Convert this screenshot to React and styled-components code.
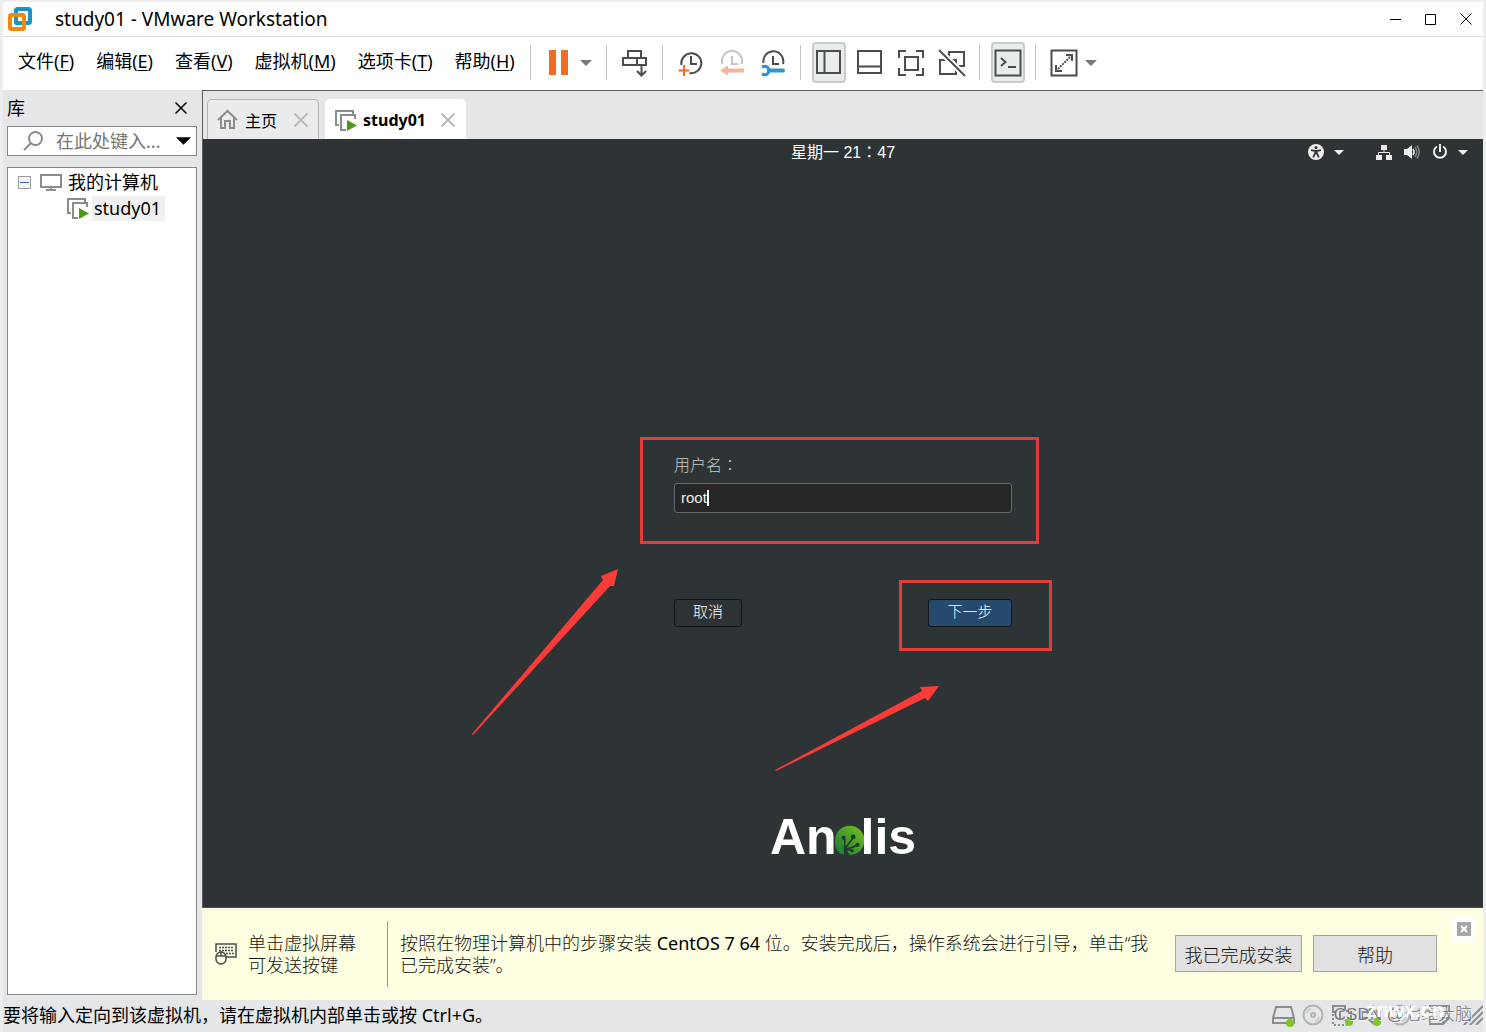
import React, { useState } from 'react';
import styled, { ThemeProvider, createGlobalStyle } from 'styled-components';

const theme = {
  colors: {
    chrome: '#e4e6e8',
    edge: '#eeeeee',
    white: '#ffffff',
    black: '#000000',
    stroke: '#4a4d50',
    grey: '#8a8d90',
    screen: '#2e3436',
    note: '#ffffe1',
    red: '#fa3b38',
    green: '#4a9a16',
    led: '#7fc81e',
    orange: '#f26b21',
    blue: '#2f93cf',
  },
  fonts: {
    ui: "'Noto Sans', 'Noto Sans CJK SC', sans-serif",
    vm: "'Liberation Sans', 'Noto Sans CJK SC', sans-serif",
  },
};

const GlobalStyle = createGlobalStyle`
  * {
    box-sizing: border-box;
  }

  body {
    margin: 0;
    background-color: ${theme.colors.edge};
    font-family: ${theme.fonts.ui};
    font-size: 18px;
    color: ${theme.colors.black};
  }

  svg {
    display: block;
    flex: none;
  }

  button,
  input {
    font: inherit;
    color: inherit;
  }
`;

const Window = styled.div`
  display: flex;
  flex-direction: column;
  min-height: 100vh;
  padding: 2px 3px 0;
`;

const TitleBar = styled.header`
  display: flex;
  align-items: center;
  height: 35px;
  padding-left: 4px;
  background-color: ${({ theme }) => theme.colors.white};
  border-bottom: 1px solid #dedfe1;
`;

const Title = styled.h1`
  flex: 1;
  margin: 0 0 0 22px;
  font-size: 19px;
  font-weight: 400;
  line-height: 24px;
`;

const PlainButton = styled.button`
  display: flex;
  align-items: center;
  justify-content: center;
  padding: 0;
  border: none;
  background-color: transparent;
`;

const CaptionButton = styled(PlainButton)`
  width: 35px;
  height: 32px;
`;

const MenuBar = styled.div`
  display: flex;
  align-items: center;
  height: 53px;
  padding-bottom: 2px;
  background-color: ${({ theme }) => theme.colors.white};
`;

const Menu = styled.nav`
  display: flex;
  gap: 22px;
  padding: 0 15px 4px;
`;

const MenuItem = styled(PlainButton)`
  line-height: 26px;
  white-space: nowrap;

  u {
    text-underline-offset: 2px;
    text-decoration-thickness: 1px;
  }
`;

const ToolBar = styled.div`
  display: flex;
  align-items: center;
`;

const ToolGroup = styled.div`
  display: flex;
  align-items: center;
  gap: ${({ $split }) => ($split ? '0' : '7px')};
  padding: 0 10px 0 11px;
  border-left: 1px solid #c3c5c7;
  height: 35px;
`;

const ToolButton = styled(PlainButton)`
  width: 34px;
  height: 41px;
  border: 2px solid ${({ $active }) => ($active ? '#c9cccd' : 'transparent')};
  border-radius: 4px;
  background-color: ${({ $active }) => ($active ? '#e9ecec' : 'transparent')};
`;

const SplitArrow = styled(PlainButton)`
  width: 20px;
  height: 41px;
`;

const Body = styled.div`
  display: flex;
  flex: 1;
  background-color: ${({ theme }) => theme.colors.chrome};
`;

const Sidebar = styled.aside`
  display: flex;
  flex-direction: column;
  flex: none;
  width: 199px;
  padding: 0 5px 5px 4px;
`;

const SidebarHead = styled.div`
  display: flex;
  align-items: center;
  justify-content: space-between;
  height: 36px;
`;

const SidebarTitle = styled.h2`
  margin: 0;
  font-size: 18px;
  font-weight: 400;
  line-height: 26px;
`;

const CloseLibrary = styled(PlainButton)`
  width: 32px;
  height: 28px;
`;

const SearchBox = styled.label`
  display: flex;
  align-items: center;
  height: 30px;
  padding: 0 5px 0 14px;
  border: 1px solid #85888b;
  background-color: ${({ theme }) => theme.colors.white};
`;

const SearchInput = styled.input`
  flex: 1;
  min-width: 0;
  margin: 0 14px 0 12px;
  padding: 0;
  border: none;
  outline: none;
  background-color: transparent;
  line-height: 26px;

  &::placeholder {
    color: #757575;
    opacity: 1;
  }
`;

const Tree = styled.ul`
  flex: 1;
  margin: 11px 0 0;
  padding: 1px 0 0 10px;
  list-style: none;
  border: 1px solid #85888b;
  background-color: ${({ theme }) => theme.colors.white};
`;

const TreeRow = styled.li`
  display: flex;
  align-items: center;
  gap: ${({ $child }) => ($child ? '4px' : '6px')};
  height: 26px;
  padding-left: ${({ $child }) => ($child ? '48px' : '0')};
`;

const Twisty = styled(PlainButton)`
  width: 13px;
  height: 13px;
  margin-right: 3px;
  border: 1px solid #9a9da0;
  background-color: #f3f3f3;
`;

const TreeLabel = styled.span`
  padding: 0 4px 0 2px;
  margin-left: -2px;
  line-height: 25px;
  background-color: ${({ $selected }) => ($selected ? '#f0f0f0' : 'transparent')};
`;

const Main = styled.main`
  display: flex;
  flex-direction: column;
  flex: 1;
  min-width: 0;
  border-top: 1px solid #5b5e60;
  border-left: 1px solid #5b5e60;
`;

const Tabs = styled.div`
  display: flex;
  align-items: flex-end;
  gap: 6px;
  height: 48px;
  padding-left: 4px;
`;

const Tab = styled(PlainButton)`
  gap: ${({ $active }) => ($active ? '5px' : '7px')};
  height: 40px;
  padding: ${({ $active }) => ($active ? '0 10px 0 8px' : '0 10px 0 9px')};
  border: 1px solid ${({ $active }) => ($active ? '#ffffff' : '#b3b6b8')};
  border-bottom: none;
  border-radius: 5px 5px 0 0;
  background-color: ${({ $active }) => ($active ? '#ffffff' : '#e9ebec')};
  font-size: 16px;
  font-weight: ${({ $active }) => ($active ? 700 : 400)};

  svg:last-child {
    margin-left: 10px;
  }
`;

const Screen = styled.section`
  position: relative;
  display: flex;
  flex-direction: column;
  flex: 1;
  background-color: ${({ theme }) => theme.colors.screen};
  border-bottom: 1px solid #4b4f50;
  color: #eeeeec;
  font-family: ${({ theme }) => theme.fonts.vm};
  font-weight: 300;
`;

const GnomeBar = styled.div`
  display: grid;
  grid-template-columns: 1fr auto 1fr;
  align-items: center;
  height: 26px;
`;

const Clock = styled.time`
  grid-column: 2;
  font-size: 16px;
  font-weight: 400;
  line-height: 24px;
  color: ${({ theme }) => theme.colors.white};
`;

/* the guest centres its fullwidth colon */
const Colon = styled.span`
  font-family: 'Noto Sans CJK TC', sans-serif;
`;

const Indicators = styled.div`
  display: flex;
  align-items: center;
  justify-content: flex-end;
  gap: 12px;
  padding-right: 15px;
`;

const IndicatorMenu = styled.div`
  display: flex;
  align-items: center;
  gap: 10px;

  &:first-child {
    margin-right: 20px;
  }
`;

const Greeter = styled.div`
  display: grid;
  flex: 1;
  grid-template-rows: 1fr auto 1fr;
  justify-items: center;
`;

const Login = styled.form`
  position: relative;
  grid-row: 2;
  width: 338px;
`;

const LoginLabel = styled.label`
  display: block;
  height: 38px;
  font-size: 16px;
  line-height: 38px;
  color: #c4c8c7;
`;

const LoginField = styled.div`
  display: flex;
  align-items: center;
  height: 30px;
  padding-left: 6px;
  border: 1px solid #636867;
  border-radius: 3px;
  background-color: #262626;
`;

const LoginInput = styled.input`
  field-sizing: content;
  padding: 0;
  border: none;
  outline: none;
  background-color: transparent;
  caret-color: transparent;
  font-size: 15px;
  line-height: 20px;
`;

const Caret = styled.span`
  width: 2px;
  height: 16px;
  background-color: ${({ theme }) => theme.colors.white};
`;

const LoginActions = styled.div`
  display: flex;
  justify-content: space-between;
  margin-top: 86px;
`;

const LoginButton = styled.button`
  width: ${({ $primary }) => ($primary ? '84px' : '68px')};
  height: 28px;
  padding: 0 0 2px;
  border: 1px solid #121617;
  border-radius: 3px;
  background-color: ${({ $primary }) => ($primary ? '#264a6d' : '#2d3335')};
  color: ${({ theme }) => theme.colors.white};
  font-size: 15px;
  line-height: 22px;
`;

const Marks = styled.svg`
  position: absolute;
  top: -8px;
  left: -202px;
  pointer-events: none;
`;

const Brand = styled.div`
  display: flex;
  grid-row: 3;
  align-self: end;
  align-items: flex-end;
  margin-bottom: 41px;
  color: ${({ theme }) => theme.colors.white};
  font-size: 50px;
  font-weight: 700;
  line-height: 58px;

  svg {
    margin: 0 -4px 10px -3px;
  }
`;

const NoteBar = styled.section`
  display: flex;
  align-items: flex-start;
  flex: none;
  min-height: 92px;
  padding: 13px 10px 13px 13px;
  margin-left: -1px;
  background-color: ${({ theme }) => theme.colors.note};
  color: #141414;
`;

const NoteHint = styled.p`
  flex: none;
  width: 140px;
  height: 66px;
  margin: 0;
  padding: 11px 24px 0 0;
  font-weight: 300;
  line-height: 22px;
  border-right: 1px solid #9b9c8e;
`;

const NoteText = styled.p`
  flex: 1;
  margin: 0;
  padding: 11px 20px 0 12px;
  font-weight: 300;
  line-height: 22px;

  b {
    font-weight: 400;
    color: ${({ theme }) => theme.colors.black};
  }
`;

const NoteIcon = styled.div`
  padding: 22px 11px 0 0;
`;

const NoteActions = styled.div`
  display: flex;
  gap: 11px;
  padding-top: 14px;
`;

const NoteButton = styled.button`
  width: ${({ $wide }) => ($wide ? '127px' : '124px')};
  height: 37px;
  padding: 0;
  border: 1px solid #a3a3a3;
  background-color: #e1e1e1;
  font-weight: 300;
`;

const NoteClose = styled(PlainButton)`
  width: 23px;
  height: 26px;
  margin: -5px -2px 0 15px;
  background-color: #fdfdfa;
`;

const StatusBar = styled.footer`
  position: relative;
  display: flex;
  align-items: center;
  justify-content: space-between;
  height: 32px;
  padding-bottom: 2px;
  background-color: ${({ theme }) => theme.colors.chrome};
  line-height: 26px;
`;

const Devices = styled.div`
  display: flex;
  align-items: center;
  gap: 7px;

  svg:last-child {
    margin-left: 5px;
  }
`;

const DeviceDivider = styled.span`
  width: 2px;
  height: 14px;
  background-color: #c3c5c7;
`;

const Watermark = styled.span`
  position: absolute;
  right: 11px;
  bottom: 4px;
  color: #77797b;
  font-family: ${({ theme }) => theme.fonts.vm};
  font-size: 17px;
  font-weight: 300;
  line-height: 26px;
  text-shadow: 1px 1px 0 #f6f6f6;
`;

const SiteMark = styled(Watermark)`
  right: 39px;
  bottom: 9px;
  color: ${({ theme }) => theme.colors.white};
  font-size: 20px;
  font-weight: 700;
  text-shadow: none;
`;

const { stroke, grey, green, led, orange, blue, red } = theme.colors;

const Icon = ({ w = 28, h = w, color = stroke, width = 2, children }) => (
  <svg
    width={w}
    height={h}
    viewBox={`0 0 ${w} ${h}`}
    fill="none"
    stroke={color}
    strokeWidth={width}
    aria-hidden="true"
  >
    {children}
  </svg>
);

const Chevron = ({ color = '#77797b', w = 12, h = 6 }) => (
  <svg width={w} height={h} viewBox="0 0 12 6" aria-hidden="true">
    <path d="M0 0h12L6 6z" fill={color} />
  </svg>
);

const Cross = ({ size = 12, color = '#000', width = 1 }) => (
  <Icon w={size} color={color} width={width}>
    <path d={`M.5.5l${size - 1} ${size - 1}M${size - 0.5}.5l-${size - 1} ${size - 1}`} />
  </Icon>
);

const VmwareLogo = () => (
  <Icon w={26} width={4}>
    <rect x="9" y="3" width="14" height="14" rx="1.5" stroke="#1a92c4" />
    <rect x="3" y="9" width="14" height="14" rx="1.5" stroke="#f0870f" />
    <path d="M9 12v3.500q0 1.500 1.500 1.500H14" stroke="#1a92c4" />
  </Icon>
);

const PauseIcon = () => (
  <svg width="20" height="26" viewBox="0 0 20 26" aria-hidden="true">
    <path d="M0 0h7v25H0zM12 0h7v25h-7z" fill={orange} />
  </svg>
);

const SendKeysIcon = () => (
  <Icon>
    <path d="M7 9V2h13v7M2 9h23v7H2zM16 9v7M20.500 17v9M16 22l4.500 4.500L25 22" />
  </Icon>
);

const SnapshotIcon = () => (
  <Icon>
    <path d="M4.500 16a10 10 0 1 1 8 8M14 7v8h6" />
    <path d="M7 16v11M1.500 21.500h11" stroke={orange} />
  </Icon>
);

const RevertIcon = () => (
  <Icon color="#c3c5c7">
    <path d="M4.500 15a10 10 0 1 1 19 0M14 7v8h6" />
    <path d="M26 21.500H8" stroke="#f9b498" strokeWidth="4" />
    <path d="M2 21.500l8-5v10z" fill="#f9b498" stroke="none" />
  </Icon>
);

const ManageIcon = () => (
  <Icon>
    <path d="M4.500 14a10 10 0 1 1 19.500 1M14 7v8h6" />
    <path d="M10 21.500h14" stroke={blue} strokeWidth="4" strokeLinecap="round" />
    <path d="M3 18q6-2.500 7 3.500q-1 6-7 3.500" stroke={blue} strokeWidth="3" />
  </Icon>
);

const LibraryIcon = () => (
  <Icon>
    <path d="M2 2h23v22H2zM9.500 2v22" />
  </Icon>
);

const ThumbnailIcon = () => (
  <Icon>
    <path d="M2 2h23v22H2zM2 17.500h23" />
  </Icon>
);

const FullScreenIcon = () => (
  <Icon>
    <path d="M2 9V2h7M19 2h7v7M26 19v7h-7M9 26H2v-7M8 8h13v13H8z" />
  </Icon>
);

const UnityIcon = () => (
  <Icon>
    <path d="M11 8V3h15v14h-6M12 11h6v5M8 11H2v14h16v-6" />
    <path d="M1 1l26 26" stroke="#fff" strokeWidth="6" />
    <path d="M1 1l26 26" />
  </Icon>
);

const ConsoleIcon = () => (
  <Icon>
    <path d="M1.500 1.500h25v25h-25zM7 9l4.500 4L7 17M14 18h8" />
  </Icon>
);

const StretchIcon = () => (
  <Icon>
    <path d="M1.500 1.500h25v25h-25zM16 6h6v6M6 16v6h6" />
    <path d="M8 20L21 7" strokeDasharray="2 1" />
  </Icon>
);

const HomeIcon = () => (
  <Icon w={21} color={grey}>
    <path d="M1 11L10.500 2L20 11M4 9v10h4v-7h5v7h4V9" />
  </Icon>
);

const VmIcon = () => (
  <Icon w={24} h={22} color={grey}>
    <path d="M5 16H2V2h17v4" />
    <path d="M12 21H7V6h14v4" />
    <path d="M13 11l10 5.500L13 22z" fill={green} stroke="none" />
  </Icon>
);

const ComputerIcon = () => (
  <Icon w={22} h={18} color={grey}>
    <path d="M1 2h20v12H1zM11 14v3M6 17h10" />
  </Icon>
);

const SearchIcon = () => (
  <Icon w={22} color={grey}>
    <circle cx="13.500" cy="8.500" r="6.500" />
    <path d="M9 13l-7 7" />
  </Icon>
);

const KeyboardIcon = () => (
  <Icon w={22} color={stroke} width={1.5}>
    <path d="M1 9V1h20v13H11" />
    <path d="M4 4.500h15M4 7.500h15M11 10.500h8" strokeDasharray="2 1" />
    <rect x="1" y="9" width="10" height="12" rx="5" />
    <path d="M1 13h10M6 8v5" />
  </Icon>
);

const AccessIcon = () => (
  <svg width="16" height="16" viewBox="0 0 16 16" aria-hidden="true">
    <circle cx="8" cy="8" r="8" fill="#eeeeec" />
    <circle cx="8" cy="3.400" r="1.500" fill="#2e3436" />
    <path
      d="M3 6.200l3.500.600h3l3.500-.600M8 7v3M5.200 13.500L7.200 9h1.600l2 4.500"
      fill="none"
      stroke="#2e3436"
      strokeWidth="1.800"
    />
  </svg>
);

const NetworkIcon = () => (
  <svg width="16" height="16" viewBox="0 0 16 16" aria-hidden="true">
    <path d="M5 1h6v5H5zM0 11h6v5H0zM10 11h6v5h-6z" fill="#eeeeec" />
    <path d="M8 5v3.500M2.500 12V8.500h11V12" fill="none" stroke="#eeeeec" />
  </svg>
);

const VolumeIcon = () => (
  <Icon w={16} color="#eeeeec" width={1.5}>
    <path d="M0 5h3l5-4v14l-5-4H0z" fill="#eeeeec" stroke="none" />
    <path d="M9 5q2 3 0 6" />
    <path d="M11 3q3.500 5 0 10M13 1.500q4.500 6.500 0 13" stroke="#7d8283" />
  </Icon>
);

const PowerIcon = () => (
  <Icon w={16} color="#eeeeec">
    <path d="M5 2.500a6 6 0 1 0 6 0M8 0v8" />
  </Icon>
);

const AnolisMark = () => (
  <svg width="31" height="31" viewBox="0 0 29 29" aria-hidden="true">
    <defs>
      <linearGradient id="leaf" x1="0" y1="1" x2="1" y2="0">
        <stop offset="0" stopColor="#117a3b" />
        <stop offset="1" stopColor="#7cc21b" />
      </linearGradient>
    </defs>
    <path d="M6 27Q0 23 1 14A13.700 13.700 0 1 1 15 28Q12 26 13 22L10 20V28z" fill="url(#leaf)" />
    <path d="M10 28V13M11 21l7-9M12 22q4 0 9-3M12 23l5 1" stroke="#20392b" strokeWidth="1.500" fill="none" />
    <g fill="#20392b">
      <circle cx="9" cy="12" r="2" />
      <circle cx="18" cy="11" r="2.200" />
      <circle cx="22" cy="18.500" r="2" />
      <circle cx="17" cy="24" r="1.500" />
    </g>
  </svg>
);

const DriveIcon = () => (
  <Icon w={24} color={grey}>
    <path d="M5 4h15l3 11v5H2v-5zM2 15h20" />
    <circle cx="19" cy="20" r="4" fill={led} stroke="none" />
  </Icon>
);

const DiscIcon = () => (
  <Icon w={22} color="#b0b3b5">
    <circle cx="11" cy="11" r="9.500" />
    <circle cx="11" cy="11" r="2" />
    <path d="M5 9q1-4 4-4.500M17 13q-1 4-4 4.500" strokeWidth="1" />
  </Icon>
);

const AdapterIcon = () => (
  <Icon w={22} color={grey}>
    <path d="M6 8H2V2h12v5M9 7h11v9H9z" />
    <path d="M2 10v11h14" strokeDasharray="2 2" />
    <circle cx="18" cy="18" r="4" fill={led} stroke="none" />
  </Icon>
);

const SoundIcon = () => (
  <Icon w={22} color={grey}>
    <path d="M2 8h5l6-5v16l-6-5H2zM16 6q4 5 0 10" />
    <circle cx="17" cy="18" r="4" fill={led} stroke="none" />
  </Icon>
);

const MessageIcon = () => (
  <Icon w={24} color={grey}>
    <path d="M3 3h19v12l-6 6H3zM22 15h-6v6" />
  </Icon>
);

const GripIcon = () => (
  <Icon w={20} color={grey}>
    <path d="M1 20L20 1M7 20L20 7M13 20l7-7" />
  </Icon>
);

const menus = [
  ['文件', 'F'],
  ['编辑', 'E'],
  ['查看', 'V'],
  ['虚拟机', 'M'],
  ['选项卡', 'T'],
  ['帮助', 'H'],
];

const tools = [
  [
    ['Take snapshot', SnapshotIcon],
    ['Revert', RevertIcon],
    ['Manage snapshots', ManageIcon],
  ],
  [
    ['Library', LibraryIcon, true],
    ['Thumbnails', ThumbnailIcon],
    ['Full screen', FullScreenIcon],
    ['Unity', UnityIcon],
  ],
  [['Console', ConsoleIcon, true]],
];

const Library = () => (
  <Sidebar>
    <SidebarHead>
      <SidebarTitle>库</SidebarTitle>
      <CloseLibrary aria-label="Close library">
        <Cross size={12} width={1.5} />
      </CloseLibrary>
    </SidebarHead>
    <SearchBox>
      <SearchIcon />
      <SearchInput placeholder="在此处键入..." aria-label="Search" />
      <Chevron color="#000" w={15} h={8} />
    </SearchBox>
    <Tree>
      <TreeRow>
        <Twisty aria-label="Collapse">
          <Icon w={9} color="#4b5f9e" width={1}>
            <path d="M0 4.500h9" />
          </Icon>
        </Twisty>
        <ComputerIcon />
        <TreeLabel>我的计算机</TreeLabel>
      </TreeRow>
      <TreeRow $child>
        <VmIcon />
        <TreeLabel $selected>study01</TreeLabel>
      </TreeRow>
    </Tree>
  </Sidebar>
);

const GuestScreen = () => {
  const [user, setUser] = useState('root');

  return (
    <Screen>
      <GnomeBar>
        <Clock>
          星期一 21<Colon>：</Colon>47
        </Clock>
        <Indicators>
          <IndicatorMenu>
            <AccessIcon />
            <Chevron color="#eeeeec" w={10} h={5} />
          </IndicatorMenu>
          <NetworkIcon />
          <VolumeIcon />
          <IndicatorMenu>
            <PowerIcon />
            <Chevron color="#eeeeec" w={10} h={5} />
          </IndicatorMenu>
        </Indicators>
      </GnomeBar>
      <Greeter>
        <Login onSubmit={(e) => e.preventDefault()}>
          <LoginLabel htmlFor="username">
            用户名<Colon>：</Colon>
          </LoginLabel>
          <LoginField>
            <LoginInput
              id="username"
              value={user}
              onChange={(e) => setUser(e.target.value)}
            />
            <Caret />
          </LoginField>
          <LoginActions>
            <LoginButton type="button">取消</LoginButton>
            <LoginButton type="submit" $primary>
              下一步
            </LoginButton>
          </LoginActions>
          <Marks width="582" height="336" viewBox="0 0 582 336" aria-hidden="true">
            <g fill="none" stroke="#e53b3b" strokeWidth="3">
              <rect x="169.500" y="1.500" width="396" height="104" />
              <rect x="428.500" y="144.500" width="150" height="68" />
            </g>
            <path d="M0 297L131 143L129 139L146 132L142 149L138 149L1 298z" fill={red} />
            <path d="M303 333L450 254L448 250L467 249L456 264L453 261L304 334z" fill={red} />
          </Marks>
        </Login>
        <Brand>
          An
          <AnolisMark />
          lis
        </Brand>
      </Greeter>
    </Screen>
  );
};

const App = () => {
  return (
    <ThemeProvider theme={theme}>
      <GlobalStyle />
      <Window>
        <TitleBar>
          <VmwareLogo />
          <Title>study01 - VMware Workstation</Title>
          <CaptionButton aria-label="Minimize">
            <Icon w={11} color="#000" width={1}>
              <path d="M0 5.500h11" />
            </Icon>
          </CaptionButton>
          <CaptionButton aria-label="Maximize">
            <Icon w={11} color="#000" width={1}>
              <path d="M.5.5h10v10H.5z" />
            </Icon>
          </CaptionButton>
          <CaptionButton aria-label="Close">
            <Cross size={12} />
          </CaptionButton>
        </TitleBar>
        <MenuBar>
          <Menu>
            {menus.map(([name, key]) => (
              <MenuItem key={key}>
                {name}(<u>{key}</u>)
              </MenuItem>
            ))}
          </Menu>
          <ToolBar>
            <ToolGroup $split>
              <ToolButton aria-label="Pause">
                <PauseIcon />
              </ToolButton>
              <SplitArrow aria-label="Power options">
                <Chevron />
              </SplitArrow>
            </ToolGroup>
            <ToolGroup>
              <ToolButton aria-label="Send Ctrl+Alt+Del">
                <SendKeysIcon />
              </ToolButton>
            </ToolGroup>
            {tools.map((items) => (
              <ToolGroup key={items[0][0]}>
                {items.map(([label, Glyph, active]) => (
                  <ToolButton key={label} aria-label={label} $active={active}>
                    <Glyph />
                  </ToolButton>
                ))}
              </ToolGroup>
            ))}
            <ToolGroup $split>
              <ToolButton aria-label="Stretch guest">
                <StretchIcon />
              </ToolButton>
              <SplitArrow aria-label="Stretch options">
                <Chevron />
              </SplitArrow>
            </ToolGroup>
          </ToolBar>
        </MenuBar>
        <Body>
          <Library />
          <Main>
            <Tabs>
              <Tab>
                <HomeIcon />
                主页
                <Cross size={14} color="#b9bcbe" width={2} />
              </Tab>
              <Tab $active>
                <VmIcon />
                study01
                <Cross size={14} color="#b9bcbe" width={2} />
              </Tab>
            </Tabs>
            <GuestScreen />
            <NoteBar>
              <NoteIcon>
                <KeyboardIcon />
              </NoteIcon>
              <NoteHint>单击虚拟屏幕可发送按键</NoteHint>
              <NoteText>
                按照在物理计算机中的步骤安装 <b>CentOS 7 64</b>{' '}
                位。安装完成后，操作系统会进行引导，单击“我已完成安装”。
              </NoteText>
              <NoteActions>
                <NoteButton $wide>我已完成安装</NoteButton>
                <NoteButton>帮助</NoteButton>
              </NoteActions>
              <NoteClose aria-label="Dismiss">
                <svg width="14" height="14" viewBox="0 0 14 14" aria-hidden="true">
                  <path d="M0 0h14v14H0z" fill="#a5a5a5" />
                  <path d="M4 4l6 6M10 4l-6 6" stroke="#fff" strokeWidth="2" />
                </svg>
              </NoteClose>
            </NoteBar>
          </Main>
        </Body>
        <StatusBar>
          <span>要将输入定向到该虚拟机，请在虚拟机内部单击或按 Ctrl+G。</span>
          <Devices>
            <DriveIcon />
            <DiscIcon />
            <AdapterIcon />
            <SoundIcon />
            <DiscIcon />
            <DeviceDivider />
            <MessageIcon />
            <GripIcon />
          </Devices>
          <Watermark>CSDN @七维大脑</Watermark>
          <SiteMark>znwx.cn</SiteMark>
        </StatusBar>
      </Window>
    </ThemeProvider>
  );
};

export default App;
